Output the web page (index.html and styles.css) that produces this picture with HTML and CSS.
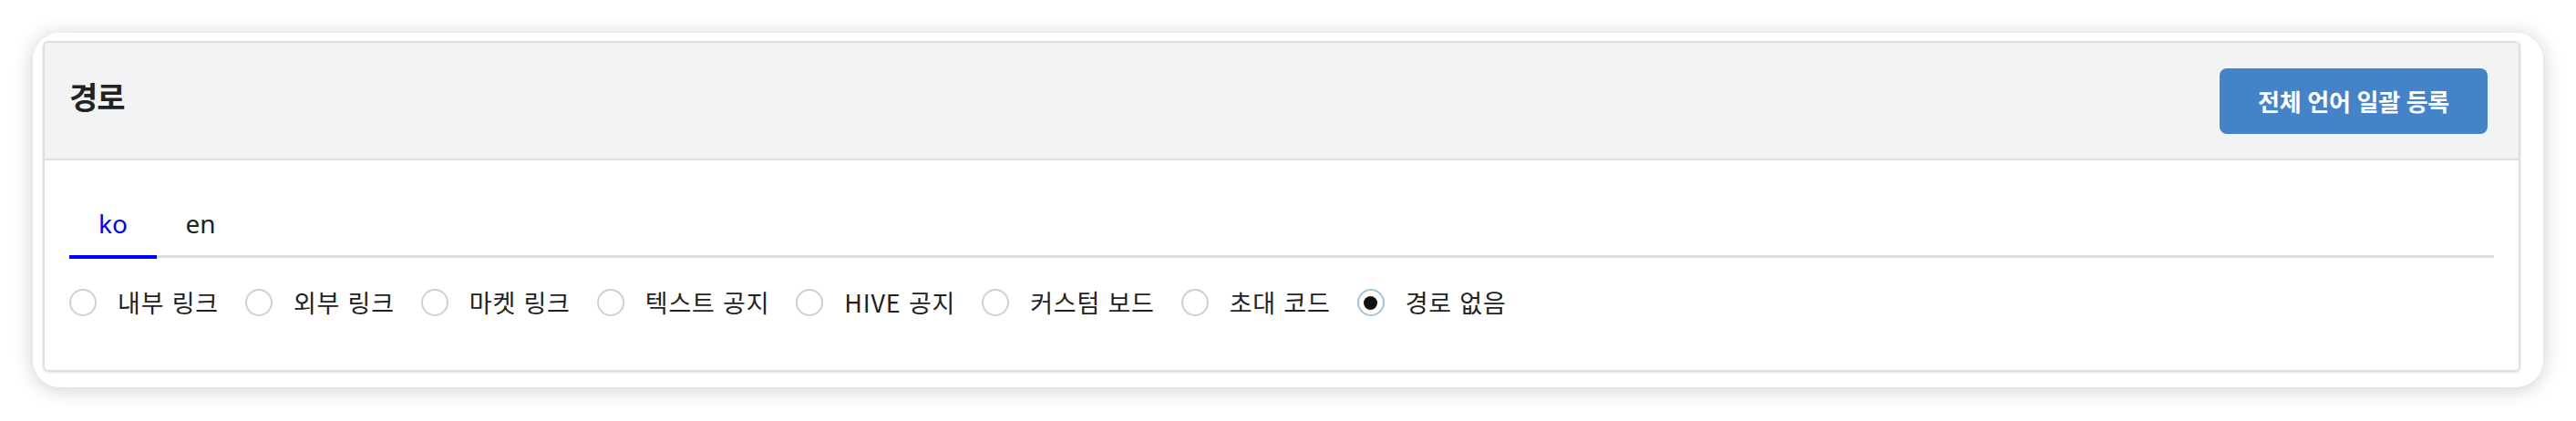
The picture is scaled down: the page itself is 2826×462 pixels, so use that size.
FILE: index.html
```html
<!DOCTYPE html>
<html lang="ko">
<head>
    <meta charset="UTF-8">
    <meta name="viewport" content="width=device-width, initial-scale=1.0">
    <title>경로</title>
    <link rel="stylesheet" href="styles.css">
</head>
<body>
    <div class="frame">
        <div class="card">
            <div class="card-header">
                <h2>경로</h2>
                <button class="btn-primary">전체 언어 일괄 등록</button>
            </div>
            <div class="card-body">
                <div class="tabs">
                    <div class="tab active">ko</div>
                    <div class="tab">en</div>
                </div>
                <div class="radio-group">
                    <label class="radio"><input type="radio" name="path"> 내부 링크</label>
                    <label class="radio"><input type="radio" name="path"> 외부 링크</label>
                    <label class="radio"><input type="radio" name="path"> 마켓 링크</label>
                    <label class="radio"><input type="radio" name="path"> 텍스트 공지</label>
                    <label class="radio"><input type="radio" name="path"> HIVE 공지</label>
                    <label class="radio"><input type="radio" name="path"> 커스텀 보드</label>
                    <label class="radio"><input type="radio" name="path"> 초대 코드</label>
                    <label class="radio"><input type="radio" name="path" checked> 경로 없음</label>
                </div>
            </div>
        </div>
    </div>
</body>
</html>
```

FILE: styles.css
```css
body {
    margin: 0;
    padding: 36px;
    background: #fff;
    font-family: "Noto Sans CJK KR", "Noto Sans", sans-serif;
    color: #222;
}

.frame {
    background: #fff;
    border-radius: 30px;
    padding: 9px 25px 17px 11px;
    box-shadow: 0 2px 22px rgba(0, 0, 0, 0.2);
}

.card {
    border: 2px solid #dedede;
    border-radius: 6px;
    box-shadow: 0 1px 3px rgba(0, 0, 0, 0.12);
    overflow: hidden;
}

.card-header {
    height: 127px;
    padding: 0 34px 0 27px;
    display: flex;
    align-items: center;
    justify-content: space-between;
    background: #f2f3f5;
    border-bottom: 2px solid #dedede;
}

.card-header h2 {
    margin: 0 0 10px;
    font-size: 34px;
    font-weight: 700;
    letter-spacing: -1px;
    color: #222;
}

.btn-primary {
    height: 72px;
    padding: 0 42px;
    border: none;
    border-radius: 8px;
    background: #4583c9;
    color: #fff;
    font-family: inherit;
    font-size: 26px;
    font-weight: 700;
    letter-spacing: -0.3px;
    cursor: pointer;
}

.card-body {
    padding: 33px 27px 59px;
}

.tabs {
    display: flex;
    border-bottom: 3px solid #dcdcdc;
}

.tab {
    width: 96px;
    padding: 16px 0 15px;
    margin-bottom: -4px;
    text-align: center;
    font-family: "Noto Sans", sans-serif;
    font-size: 28px;
    line-height: 40px;
    color: #222;
    border-bottom: 4px solid transparent;
}

.tab.active {
    color: #0000ff;
    border-bottom-color: #0000ff;
}

.radio-group {
    display: flex;
    gap: 29px;
    margin-top: 34px;
}

.radio {
    display: flex;
    align-items: center;
    height: 30px;
    font-size: 27px;
    letter-spacing: 0.8px;
    line-height: 30px;
    color: #222;
    white-space: nowrap;
}

.radio input {
    appearance: none;
    width: 30px;
    height: 30px;
    margin: 0 23px 0 0;
    border: 2px solid #d0d0d0;
    border-radius: 50%;
    background: #fff;
    display: grid;
    place-items: center;
}

.radio input:checked {
    border-color: #9fc6de;
}

.radio input:checked::after {
    content: "";
    width: 15px;
    height: 15px;
    border-radius: 50%;
    background: #111;
}
```
